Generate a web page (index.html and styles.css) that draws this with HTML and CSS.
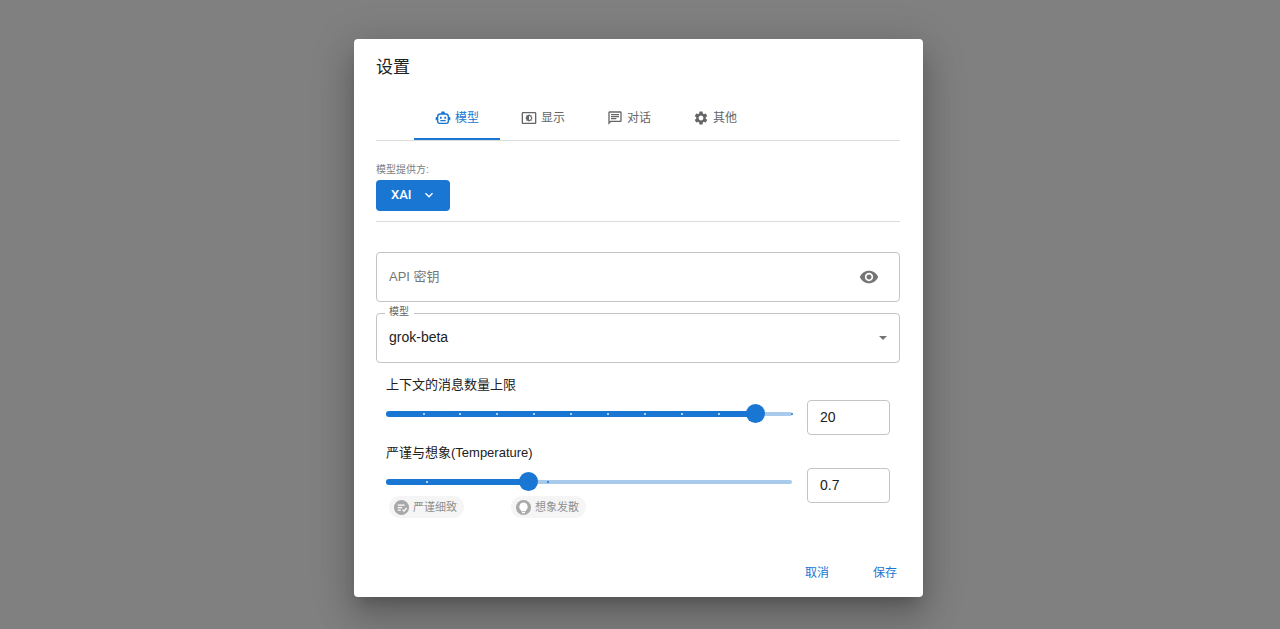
FILE: index.html
```html
<!DOCTYPE html>
<html lang="zh-CN">
<head>
<meta charset="utf-8">
<meta name="viewport" content="width=device-width, initial-scale=1">
<title>设置</title>
<link rel="stylesheet" href="styles.css">
</head>
<body>
<main class="dialog" role="dialog" aria-labelledby="dialog-title">
  <h1 class="dialog-title" id="dialog-title">设置</h1>

  <div class="tabs" role="tablist">
    <button class="tab tab-active" role="tab" aria-selected="true" type="button">
      <svg class="icon" viewBox="0 0 24 24" aria-hidden="true"><path fill-rule="evenodd" d="M9 5a3 3 0 0 1 6 0h1a5 5 0 0 1 5 5v0.500h1a1 1 0 0 1 1 1v3a1 1 0 0 1-1 1h-1V17a4 4 0 0 1-4 4H7a4 4 0 0 1-4-4v-1.500H2a1 1 0 0 1-1-1v-3a1 1 0 0 1 1-1h1V10a5 5 0 0 1 5-5zM8 7a3 3 0 0 0-3 3v7a2 2 0 0 0 2 2h10a2 2 0 0 0 2-2v-7a3 3 0 0 0-3-3zM7.500 10h2.500v3H7.500zM14 10h2.500v3H14zM8 15h8v2H8z"/></svg>
      <span>模型</span>
    </button>
    <button class="tab" role="tab" aria-selected="false" type="button">
      <svg class="icon" viewBox="0 0 24 24" aria-hidden="true"><path d="M21 3H3c-1.100 0-2 .9-2 2v14c0 1.100.9 2 2 2h18c1.100 0 2-.9 2-2V5c0-1.100-.9-2-2-2zm0 16H3V5h18v14zM8 16h2.500l1.500 1.500 1.500-1.500H16v-2.500l1.500-1.500-1.500-1.500V8h-2.500L12 6.500 10.500 8H8v2.500L6.500 12 8 13.500V16zm4-7c1.660 0 3 1.340 3 3s-1.340 3-3 3V9z"/></svg>
      <span>显示</span>
    </button>
    <button class="tab" role="tab" aria-selected="false" type="button">
      <svg class="icon" viewBox="0 0 24 24" aria-hidden="true"><path d="M4 4h16v12H5.170L4 17.170V4m0-2c-1.100 0-1.990.9-1.990 2L2 22l4-4h14c1.100 0 2-.9 2-2V4c0-1.100-.9-2-2-2H4zm2 10h8v2H6v-2zm0-3h12v2H6V9zm0-3h12v2H6V6z"/></svg>
      <span>对话</span>
    </button>
    <button class="tab" role="tab" aria-selected="false" type="button">
      <svg class="icon" viewBox="0 0 24 24" aria-hidden="true"><path d="M19.140 12.940c.04-.3.060-.61.060-.94 0-.32-.02-.64-.07-.94l2.030-1.580c.18-.14.230-.41.120-.61l-1.920-3.320c-.12-.22-.37-.29-.59-.22l-2.390.96c-.5-.38-1.030-.7-1.620-.94l-.36-2.540c-.04-.24-.24-.41-.48-.41h-3.840c-.24 0-.43.170-.47.410l-.36 2.540c-.59.240-1.130.570-1.620.940l-2.390-.96c-.22-.08-.47 0-.59.220L2.740 8.870c-.12.210-.08.470.120.610l2.030 1.580c-.05.3-.09.630-.09.940s.02.640.070.940l-2.030 1.580c-.18.140-.23.410-.12.610l1.920 3.320c.12.220.370.290.590.220l2.390-.96c.5.380 1.030.7 1.620.940l.36 2.540c.05.240.240.410.480.410h3.840c.24 0 .44-.17.470-.41l.36-2.540c.59-.24 1.130-.56 1.620-.94l2.390.96c.22.080.470 0 .59-.22l1.920-3.320c.12-.22.070-.47-.12-.61l-2.010-1.580zM12 15.600c-1.980 0-3.600-1.620-3.600-3.600s1.620-3.600 3.600-3.600 3.600 1.620 3.600 3.600-1.620 3.600-3.600 3.600z"/></svg>
      <span>其他</span>
    </button>
  </div>

  <section class="provider">
    <span class="provider-label" id="provider-label">模型提供方:</span>
    <button class="provider-button" type="button" aria-describedby="provider-label">
      <span>XAI</span>
      <svg class="chevron" viewBox="0 0 24 24" aria-hidden="true"><path d="M7.410 8.590 12 13.170l4.590-4.580L18 10l-6 6-6-6 1.410-1.410z"/></svg>
    </button>
  </section>

  <div class="fields">
    <div class="field">
      <input class="field-input" type="password" placeholder="API 密钥" aria-label="API 密钥">
      <button class="eye-button" type="button" aria-label="显示密钥">
        <svg class="eye" viewBox="0 0 24 24" aria-hidden="true"><path d="M12 4.500C7 4.500 2.730 7.610 1 12c1.730 4.390 6 7.500 11 7.500s9.270-3.110 11-7.500c-1.730-4.390-6-7.500-11-7.500zM12 17c-2.760 0-5-2.240-5-5s2.240-5 5-5 5 2.240 5 5-2.240 5-5 5zm0-8c-1.660 0-3 1.340-3 3s1.340 3 3 3 3-1.340 3-3-1.340-3-3-3z"/></svg>
      </button>
    </div>
    <div class="field">
      <label class="field-label" for="model">模型</label>
      <select class="field-input field-select" id="model"><option>grok-beta</option></select>
      <svg class="arrow" viewBox="0 0 10 5" aria-hidden="true"><path d="M0 0h10L5 5z"/></svg>
    </div>
  </div>

  <section class="setting">
    <label class="setting-label" for="context">上下文的消息数量上限</label>
    <div class="setting-row">
      <div class="slider">
        <span class="rail"></span>
        <span class="fill" style="width:91%"></span>
        <span class="tick" style="left:9%"></span>
        <span class="tick" style="left:18.1%"></span>
        <span class="tick" style="left:27.2%"></span>
        <span class="tick" style="left:36.3%"></span>
        <span class="tick" style="left:45.4%"></span>
        <span class="tick" style="left:54.5%"></span>
        <span class="tick" style="left:63.6%"></span>
        <span class="tick" style="left:72.7%"></span>
        <span class="tick" style="left:81.8%"></span>
        <span class="tick tick-off" style="left:99.7%"></span>
        <input class="range" id="context" type="range" min="0" max="22" value="20">
      </div>
      <input class="number" type="text" value="20" aria-label="上下文的消息数量上限">
    </div>
  </section>

  <section class="setting">
    <label class="setting-label" for="temperature">严谨与想象(Temperature)</label>
    <div class="setting-row">
      <div class="slider">
        <span class="rail"></span>
        <span class="fill" style="width:35%"></span>
        <span class="tick" style="left:9.8%"></span>
        <span class="tick tick-off" style="left:39.7%"></span>
        <input class="range" id="temperature" type="range" min="0" max="2" step="0.1" value="0.7">
        <span class="chip chip-low">
          <svg class="chip-icon" viewBox="0 0 24 24" aria-hidden="true"><circle cx="12" cy="12" r="12"/><path class="chip-mark" d="M6 7h11v2H6zm0 4h7v2H6zm0 4h5v2H6zm7 1 1.400-1.400 1.600 1.600 3.600-4.200 1.400 1.400-5 5.600z"/></svg>
          <span>严谨细致</span>
        </span>
        <span class="chip chip-high">
          <svg class="chip-icon" viewBox="0 0 24 24" aria-hidden="true"><circle cx="12" cy="12" r="12"/><path class="chip-mark" d="M12 4a7 7 0 0 0-4 12.500V18h8v-1.500A7 7 0 0 0 12 4zM9.500 19h5v2h-5z"/></svg>
          <span>想象发散</span>
        </span>
      </div>
      <input class="number" type="text" value="0.7" aria-label="严谨与想象(Temperature)">
    </div>
  </section>

  <footer class="actions">
    <button class="action" type="button">取消</button>
    <button class="action" type="button">保存</button>
  </footer>
</main>
</body>
</html>
```
FILE: styles.css
```css
* {
  box-sizing: border-box;
}

body {
  margin: 0;
  min-height: 100vh;
  padding: 39px 16px 32px 13px;
  background: #808080;
  color: #212121;
  font: 14px/20px "Liberation Sans", "Noto Sans CJK SC", sans-serif;
}

button,
input,
select {
  font: inherit;
  color: inherit;
}

button {
  border: 0;
  padding: 0;
  background: none;
  cursor: pointer;
}

svg {
  display: block;
  fill: currentColor;
}

.dialog {
  max-width: 569px;
  margin: 0 auto;
  padding: 16px 23px 12px 22px;
  background: #fff;
  border-radius: 4px;
  box-shadow: 0 10px 14px -6px rgba(0, 0, 0, .2), 0 22px 35px 3px rgba(0, 0, 0, .14), 0 8px 42px 7px rgba(0, 0, 0, .12);
}

.dialog-title {
  margin: 0;
  font-size: 17px;
  font-weight: 400;
  line-height: 26px;
}

.tabs {
  display: flex;
  margin-top: 14px;
  padding-left: 38px;
  border-bottom: 1px solid #dcdcdc;
}

.tab {
  display: flex;
  flex: 0 0 86px;
  align-items: center;
  justify-content: center;
  gap: 4px;
  height: 45px;
  padding-top: 2px;
  border-bottom: 2px solid transparent;
  color: #666;
  font-size: 12px;
}

.tab-active {
  border-color: #1976d2;
  color: #1976d2;
}

.icon {
  width: 16px;
  height: 16px;
}

.provider {
  display: flex;
  flex-direction: column;
  align-items: flex-start;
  padding: 20px 0 10px;
  border-bottom: 1px solid #dcdcdc;
}

.provider-label {
  margin-bottom: 2px;
  color: #808080;
  font-size: 10px;
  line-height: 17px;
}

.provider-button {
  display: flex;
  align-items: center;
  gap: 9px;
  height: 31px;
  padding: 0 13px 1px 15px;
  border-radius: 4px;
  background: #1976d2;
  color: #fff;
  font-family: Roboto, sans-serif;
  font-size: 13px;
  font-weight: 500;
}

.chevron {
  width: 16px;
  height: 16px;
}

.fields {
  display: grid;
  gap: 11px;
  margin-top: 30px;
}

.field {
  display: flex;
  position: relative;
  align-items: center;
  height: 50px;
  border: 1px solid #c4c4c4;
  border-radius: 4px;
}

.field-input {
  flex: 1;
  min-width: 0;
  height: 100%;
  padding: 0 12px 2px;
  border: 0;
  outline: 0;
  background: none;
}

.field-input::placeholder {
  color: #757575;
  font-size: 13px;
  opacity: 1;
}

.field-select {
  appearance: none;
}

.field-label {
  position: absolute;
  top: -9px;
  left: 8px;
  padding: 0 5px 0 4px;
  background: #fff;
  color: #666;
  font-size: 10px;
  line-height: 14px;
}

.eye-button {
  margin-right: 20px;
  color: #757575;
}

.eye {
  width: 20px;
  height: 20px;
}

.arrow {
  position: absolute;
  right: 12px;
  width: 8px;
  height: 4px;
  color: #757575;
  pointer-events: none;
}

.setting {
  padding: 0 10px;
}

.fields + .setting {
  margin-top: 12px;
}

.setting-label {
  display: block;
  font-size: 13px;
}

.setting-row {
  display: flex;
  gap: 15px;
  height: 48px;
  padding-top: 5px;
}

.slider {
  position: relative;
  flex: 1;
  height: 16px;
  margin-top: 6px;
}

.rail,
.fill,
.tick {
  position: absolute;
  left: 0;
}

.rail {
  top: 6px;
  width: 100%;
  height: 4px;
  border-radius: 2px;
  background: #a7caed;
}

.fill {
  top: 5px;
  height: 6px;
  border-radius: 3px;
  background: #1976d2;
}

.tick {
  top: 7px;
  width: 2px;
  height: 2px;
  border-radius: 1px;
  background: #e3f0fc;
}

.tick-off {
  background: #1976d2;
}

.range {
  position: absolute;
  top: -2px;
  left: -9px;
  width: calc(100% + 19px);
  height: 19px;
  margin: 0;
  appearance: none;
  background: none;
}

.range::-webkit-slider-thumb {
  appearance: none;
  width: 19px;
  height: 19px;
  border: 0;
  border-radius: 50%;
  background: #1976d2;
}

.number {
  flex: 0 0 83px;
  width: 83px;
  height: 35px;
  padding: 0 12px 2px;
  border: 1px solid #c4c4c4;
  border-radius: 4px;
  background: #fff;
}

.chip {
  display: flex;
  position: absolute;
  top: 22px;
  align-items: center;
  gap: 4px;
  height: 22px;
  padding: 0 7px 0 5px;
  border-radius: 11px;
  background: #f5f5f5;
  color: #909090;
  font-size: 11px;
  white-space: nowrap;
}

.chip-low {
  left: 3px;
}

.chip-high {
  left: 125px;
}

.chip-icon {
  width: 15px;
  height: 15px;
  color: #a8a8a8;
}

.chip-mark {
  fill: #fff;
}

.actions {
  display: flex;
  justify-content: flex-end;
  gap: 44px;
  margin-top: 50px;
  padding: 0 3px;
}

.action {
  height: 24px;
  color: #1976d2;
  font-size: 12px;
}
```
